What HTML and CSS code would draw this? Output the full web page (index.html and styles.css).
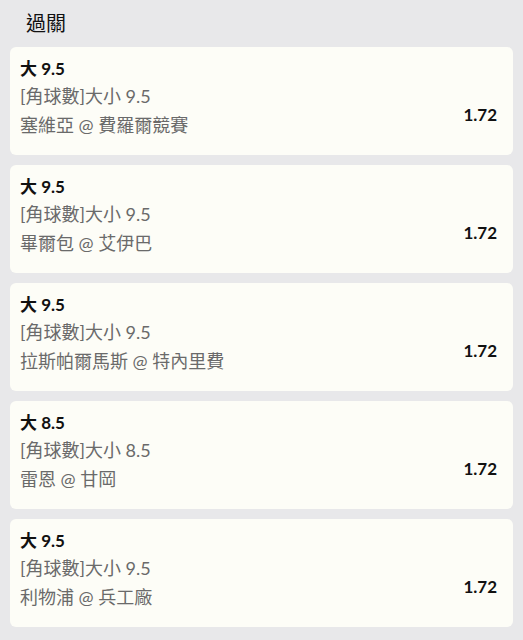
FILE: index.html
```html
<!DOCTYPE html>
<html lang="zh-Hant">
<head>
  <meta charset="UTF-8" />
  <meta name="viewport" content="width=device-width, initial-scale=1.0" />
  <title>過關</title>
  <link rel="stylesheet" href="styles.css">
</head>
<body>
  <h1 class="title">過關</h1>

  <div class="bet-list">
    <div class="bet">
      <div class="bet-info">
        <div class="pick">大 9.5</div>
        <div class="market">[角球數]大小 9.5</div>
        <div class="match">塞維亞 @ 費羅爾競賽</div>
      </div>
      <div class="odds">1.72</div>
    </div>

    <div class="bet">
      <div class="bet-info">
        <div class="pick">大 9.5</div>
        <div class="market">[角球數]大小 9.5</div>
        <div class="match">畢爾包 @ 艾伊巴</div>
      </div>
      <div class="odds">1.72</div>
    </div>

    <div class="bet">
      <div class="bet-info">
        <div class="pick">大 9.5</div>
        <div class="market">[角球數]大小 9.5</div>
        <div class="match">拉斯帕爾馬斯 @ 特內里費</div>
      </div>
      <div class="odds">1.72</div>
    </div>

    <div class="bet">
      <div class="bet-info">
        <div class="pick">大 8.5</div>
        <div class="market">[角球數]大小 8.5</div>
        <div class="match">雷恩 @ 甘岡</div>
      </div>
      <div class="odds">1.72</div>
    </div>

    <div class="bet">
      <div class="bet-info">
        <div class="pick">大 9.5</div>
        <div class="market">[角球數]大小 9.5</div>
        <div class="match">利物浦 @ 兵工廠</div>
      </div>
      <div class="odds">1.72</div>
    </div>
  </div>
</body>
</html>
```

FILE: styles.css
```css
body {
  font-family: Lato, "Noto Sans CJK TC", sans-serif;
  margin: 0;
  padding: 0 10px;
  background: #e8e8ea;
  color: #111;
}
.title {
  font-size: 20px;
  font-weight: normal;
  margin: 0;
  padding: 8px 16px 0;
  line-height: 30px;
  height: 39px;
}
.bet-list {
  display: flex;
  flex-direction: column;
  gap: 10px;
}
.bet {
  display: flex;
  align-items: center;
  justify-content: space-between;
  background: #fdfdf7;
  border-radius: 6px;
  padding: 9px 16px 15px 10px;
  height: 108px;
  box-sizing: border-box;
}
.pick {
  font-size: 17px;
  font-weight: bold;
  line-height: 26px;
}
.market, .match {
  font-size: 18px;
  color: #6a6a6a;
  line-height: 29px;
}
.odds {
  font-size: 17px;
  font-weight: bold;
  margin-top: 33px;
}
```
